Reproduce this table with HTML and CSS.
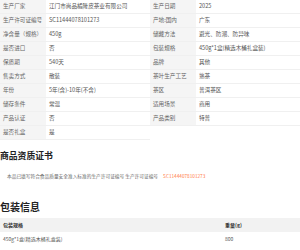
FILE: index.html
```html
<!DOCTYPE html>
<html lang="zh">
<head>
<meta charset="utf-8">
<link rel="stylesheet" href="styles.css">
</head>
<body>
<div class="attrs">
  <div class="col">
    <div class="row"><div class="k">生产厂家</div><div class="v">江门市尚品橘隆皮茶业有限公司</div></div>
    <div class="row"><div class="k">生产许可证编号</div><div class="v">SC11444078101273</div></div>
    <div class="row"><div class="k">净含量（规格）</div><div class="v">450g</div></div>
    <div class="row"><div class="k">是否进口</div><div class="v">否</div></div>
    <div class="row"><div class="k">保质期</div><div class="v">540天</div></div>
    <div class="row"><div class="k">售卖方式</div><div class="v">散装</div></div>
    <div class="row"><div class="k">年份</div><div class="v">5年(含)-10年(不含)</div></div>
    <div class="row"><div class="k">储存条件</div><div class="v">常温</div></div>
    <div class="row"><div class="k">产品认证</div><div class="v">否</div></div>
    <div class="row"><div class="k">是否礼盒</div><div class="v">是</div></div>
  </div>
  <div class="col">
    <div class="row"><div class="k">生产日期</div><div class="v">2025</div></div>
    <div class="row"><div class="k">产地:国内</div><div class="v">广东</div></div>
    <div class="row"><div class="k">储藏方法</div><div class="v">避光、防潮、防异味</div></div>
    <div class="row"><div class="k">包装规格</div><div class="v">450g*1盒(精选木桶礼盒装)</div></div>
    <div class="row"><div class="k">品牌</div><div class="v">其他</div></div>
    <div class="row"><div class="k">茶叶生产工艺</div><div class="v">熟茶</div></div>
    <div class="row"><div class="k">茶区</div><div class="v">普洱茶区</div></div>
    <div class="row"><div class="k">适用场景</div><div class="v">商用</div></div>
    <div class="row"><div class="k">产品类别</div><div class="v">特普</div></div>
  </div>
</div>

<h2 class="title cert-title">商品资质证书</h2>
<p class="cert">本品已填写符合食品质量安全准入标准的生产许可证编号 生产许可证编号 <span class="sc">SC11444078101273</span></p>

<h2 class="title pack-title">包装信息</h2>
<div class="pack">
  <div class="prow head"><div class="c1">包装规格</div><div class="c2">重量(g)</div></div>
  <div class="prow"><div class="c1">450g*1盒(精选木桶礼盒装)</div><div class="c2">800</div></div>
</div>
</body>
</html>
```

FILE: styles.css
```css
* { box-sizing: border-box; }
html, body { margin: 0; padding: 0; background: #fff; }
body {
  font-family: "Noto Sans CJK SC", "Noto Sans", sans-serif;
  color: #555;
  width: 300px;
  overflow: hidden;
}
.attrs {
  display: grid;
  grid-template-columns: 150px 150px;
  align-items: start;
}
.row {
  display: grid;
  grid-template-columns: 46px 1fr;
  height: 14px;
  border-bottom: 1px solid #f0f0f0;
  font-size: 5.6px;
  line-height: 13px;
}
.k {
  background: #f5f5f5;
  color: #666;
  padding-left: 3px;
  white-space: nowrap;
}
.v {
  padding-left: 3px;
  color: #555;
  white-space: nowrap;
}
.title {
  margin: 0;
  font-weight: 700;
  color: #222;
}
.cert-title {
  font-size: 8.8px;
  line-height: 12px;
  margin-top: 10px;
}
.cert {
  margin: 10px 0 0;
  padding-left: 7px;
  font-size: 4.7px;
  line-height: 8px;
  color: #666;
  white-space: nowrap;
}
.sc { color: #ff7a45; margin-left: 4px; }
.pack-title {
  font-size: 10px;
  line-height: 14px;
  margin-top: 20px;
}
.pack { margin-top: 4px; }
.prow {
  display: grid;
  grid-template-columns: 222px 1fr;
  height: 13px;
  line-height: 13px;
  font-size: 5px;
  color: #555;
}
.prow.head {
  background: #f2f2f2;
  color: #333;
  font-weight: 700;
  height: 14px;
  line-height: 14px;
}
.c1, .c2 { padding-left: 3px; white-space: nowrap; }
```
